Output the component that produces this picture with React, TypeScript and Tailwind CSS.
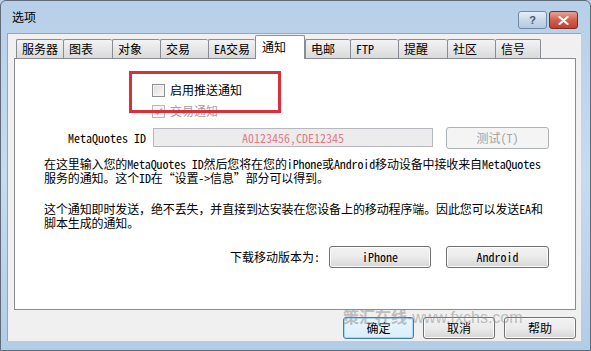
import React from "react";

const F = "font-['Noto_Sans_Mono_CJK_SC','Noto_Sans_CJK_SC',sans-serif]";

const tabs: { label: string; w: number; active?: boolean }[] = [
  { label: "服务器", w: 47 },
  { label: "图表", w: 49 },
  { label: "对象", w: 48 },
  { label: "交易", w: 48 },
  { label: "EA交易", w: 47 },
  { label: "通知", w: 50, active: true },
  { label: "电邮", w: 45 },
  { label: "FTP", w: 48 },
  { label: "提醒", w: 49 },
  { label: "社区", w: 48 },
  { label: "信号", w: 46 },
];

function Btn({ children, w, focus, disabled }: { children: React.ReactNode; w: number; focus?: boolean; disabled?: boolean }) {
  return (
    <div
      style={{ width: w }}
      className={
        "h-[22px] flex items-center justify-center rounded-[3px] border text-[12px] leading-none " +
        (disabled
          ? "border-[#adb2b5] bg-[#f4f4f4] text-[#a3a3a3]"
          : focus
          ? "border-[#3c7fb1] bg-gradient-to-b from-[#eaf6fd] to-[#d9eefa] text-black shadow-[inset_0_0_0_1px_#a7d9f5]"
          : "border-[#707070] bg-gradient-to-b from-[#f2f2f2] via-[#ebebeb] to-[#d6d6d6] text-black shadow-[inset_0_0_0_1px_#fcfcfc]")
      }
    >
      {children}
    </div>
  );
}

export default function App() {
  return (
    <div className={"relative w-[591px] h-[351px] overflow-hidden bg-[#b9d1ea] " + F}>
      {/* frame */}
      <div className="absolute inset-0 border border-[#5f6b78] rounded-t-[6px] bg-gradient-to-b from-[#b7cfe8] via-[#c7dbef] to-[#b3cce6]" />
      <div className="relative flex flex-col h-full">
        {/* title bar */}
        <div className="h-[33px] flex items-start justify-between pl-[12px] pr-[13px]">
          <div className="mt-[10px] text-[12px] leading-[14px] text-black">选项</div>
          <div className="mt-[11px] flex gap-[2px]">
            <div className="w-[29px] h-[18px] rounded-[3px] border border-[#6d8aa8] bg-gradient-to-b from-[#e6eef7] via-[#c9d9ea] to-[#b3c9e0] flex items-center justify-center text-[11px] font-bold text-[#4a5a6b] font-['Liberation_Sans',sans-serif]">
              ?
            </div>
            <div className="w-[29px] h-[18px] rounded-[3px] border border-[#7a2b2b] bg-gradient-to-b from-[#e8a193] via-[#d2604d] to-[#c2402e] flex items-center justify-center">
              <svg width="11" height="9" viewBox="0 0 11 9">
                <path d="M1.5 1 L9.5 8 M9.5 1 L1.5 8" stroke="#ffffff" strokeWidth="2.2" strokeLinecap="round" />
              </svg>
            </div>
          </div>
        </div>
        {/* client */}
        <div className="ml-[7px] w-[574px] h-[308px] bg-[#f0f0f0] border-t border-l border-[#8ea6c1] flex flex-col">
          {/* tabs */}
          <div className="h-[24px] flex items-end pl-[8px]">
            {tabs.map((t) =>
              t.active ? (
                <div
                  key={t.label}
                  style={{ width: t.w }}
                  className="relative z-10 h-[24px] -mb-px border border-b-0 border-[#898c95] bg-white rounded-t-[2px] pl-[6px] pt-[3px] text-[12px] leading-[16px] text-black"
                >
                  {t.label}
                </div>
              ) : (
                <div
                  key={t.label}
                  style={{ width: t.w }}
                  className="h-[19px] border border-b-0 border-r-0 last:border-r border-[#898c95] bg-gradient-to-b from-[#f3f3f3] to-[#dadada] rounded-t-[2px] pl-[5px] pt-[1px] text-[12px] leading-[16px] text-black"
                >
                  {t.label}
                </div>
              )
            )}
          </div>
          {/* panel */}
          <div className="relative ml-[6px] w-[562px] h-[252px] bg-white border border-[#898c95] text-[12px] text-black">
            {/* highlight box */}
            <div className="absolute left-[114px] top-[12px] w-[152px] h-[42px] border-[3px] border-[#d9303c]" />
            <div className="flex items-center ml-[137px] mt-[24px] h-[14px] gap-[5px]">
              <div className="w-[13px] h-[13px] border border-[#8f8f8f] bg-gradient-to-br from-[#dcdcdc] to-[#fbfbfb] shadow-[inset_0_0_0_1px_#f4f4f4]" />
              <span className="leading-[14px]">启用推送通知</span>
            </div>
            <div className="flex items-center ml-[137px] mt-[7px] h-[14px] gap-[5px] text-[#a0a0a0]">
              <div className="w-[13px] h-[13px] border border-[#b8b8b8] bg-[#f4f4f4] flex items-center justify-center">
                <svg width="9" height="9" viewBox="0 0 9 9">
                  <path d="M1 4.5 L3.5 7 L8 1.5" stroke="#a8a8a8" strokeWidth="1.8" fill="none" />
                </svg>
              </div>
              <span className="leading-[14px]">交易通知</span>
            </div>
            {/* MetaQuotes ID row */}
            <div className="flex items-center mt-[9px] h-[21px]">
              <div className="w-[131px] text-right text-[12px] leading-none">MetaQuotes ID</div>
              <div className="ml-[7px] w-[280px] h-[19px] border border-[#b5b9bd] bg-[#ececec] flex items-center justify-center text-[#e27c8a] text-[12px] leading-none">
                A0123456,CDE12345
              </div>
              <div className="ml-[13px]">
                <Btn w={103} disabled>
                  测试(T)
                </Btn>
              </div>
            </div>
            {/* paragraphs */}
            <div className="ml-[29px] mt-[9px] leading-[14px] whitespace-nowrap tracking-[-0.12px]">
              <div>在这里输入您的MetaQuotes ID然后您将在您的iPhone或Android移动设备中接收来自MetaQuotes</div>
              <div>服务的通知。这个ID在“设置-&gt;信息”部分可以得到。</div>
            </div>
            <div className="ml-[29px] mt-[17px] leading-[14px] whitespace-nowrap tracking-[-0.12px]">
              <div>这个通知即时发送，绝不丢失，并直接到达安装在您设备上的移动程序端。因此您可以发送EA和</div>
              <div>脚本生成的通知。</div>
            </div>
            {/* download row */}
            <div className="flex items-center justify-end mr-[26px] mt-[16px] h-[22px]">
              <span className="mr-[9px] leading-none">下载移动版本为:</span>
              <Btn w={102}>iPhone</Btn>
              <div className="w-[15px]" />
              <Btn w={103}>Android</Btn>
            </div>
          </div>
          {/* bottom buttons */}
          <div className="flex justify-end gap-[9px] mr-[5px] mt-[7px]">
            <Btn w={71} focus>
              确定
            </Btn>
            <Btn w={72}>取消</Btn>
            <Btn w={72}>帮助</Btn>
          </div>
        </div>
      </div>
      {/* watermark */}
      <div className="absolute left-[343px] top-[310px] text-[16px] leading-none text-[#8a8a8a] opacity-50 font-['Liberation_Sans','Noto_Sans_CJK_SC',sans-serif] whitespace-nowrap">
        <span className="font-bold">策汇在线</span>-www.fxchs.com
      </div>
    </div>
  );
}
